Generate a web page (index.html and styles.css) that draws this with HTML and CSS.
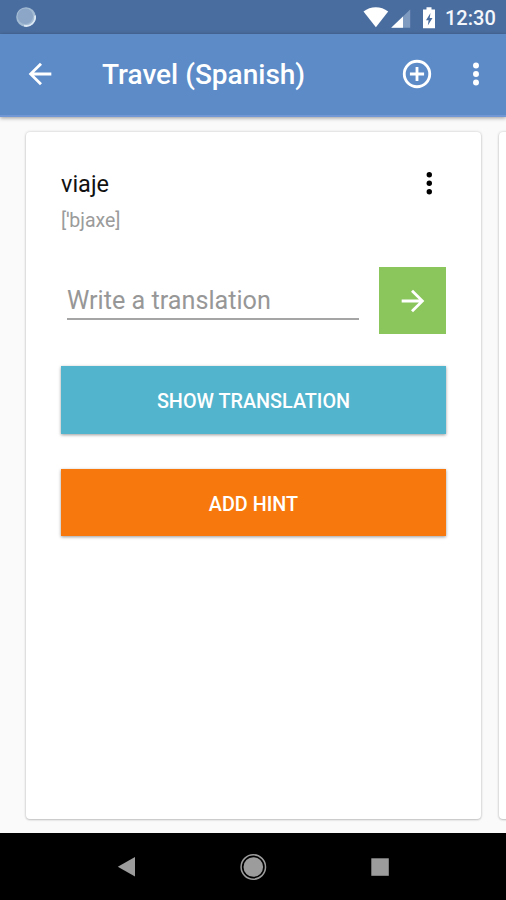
FILE: index.html
```html
<!DOCTYPE html>
<html lang="en">
<head>
<meta charset="utf-8">
<title>Travel (Spanish)</title>
<link rel="stylesheet" href="styles.css">
</head>
<body>
<div class="screen">
  <div class="status">
    <svg class="spinner" width="22" height="22" viewBox="0 0 22 22"><circle cx="11" cy="11" r="9.800" fill="#a3bbd3"/><circle cx="10.300" cy="10.200" r="7.800" fill="#8ba6c6"/><path d="M20 9.500a9 9 0 0 1-11 10.200" fill="none" stroke="#dce9f5" stroke-width="1.800"/></svg>
    <svg class="signals" width="73" height="24" viewBox="0 0 73 24">
      <path d="M0.500 5.600C7.500-.2 18-.2 25.200 5.600L12.900 21.300z" fill="#fff"/>
      <path d="M47.200 3.500V21.800H28.200z" fill="#7f9cc0"/>
      <path d="M40 10.500V21.800H28.200z" fill="#fff"/>
      <path d="M60 3.500h3.500V1.200h5V3.500H72v18.800H60z" fill="#fff"/>
      <path d="M67.500 7l-4.500 7.200h2.600l-.8 5.300 4.700-7.600h-2.800z" fill="#4a6d9f"/>
    </svg>
    <span class="time">12:30</span>
  </div>
  <header class="toolbar">
    <svg class="icon" viewBox="0 0 24 24"><path d="M20 11H7.830l5.590-5.590L12 4l-8 8 8 8 1.410-1.410L7.830 13H20z"/></svg>
    <h1 class="title">Travel (Spanish)</h1>
    <svg class="icon add" viewBox="0 0 24 24"><path d="M13 7h-2v4H7v2h4v4h2v-4h4v-2h-4zM12 2a10 10 0 1 0 0 20 10 10 0 0 0 0-20zm0 18a8 8 0 1 1 0-16 8 8 0 0 1 0 16z"/></svg>
    <svg class="icon" viewBox="0 0 24 24"><circle cx="12" cy="6" r="2.100"/><circle cx="12" cy="12" r="2.100"/><circle cx="12" cy="18" r="2.100"/></svg>
  </header>
  <main class="pager">
    <section class="card">
      <div class="word-row">
        <div>
          <div class="word">viaje</div>
          <div class="phonetic">[ˈbjaxe]</div>
        </div>
        <svg class="icon dark" viewBox="0 0 24 24"><circle cx="12.200" cy="6.200" r="1.900"/><circle cx="12.200" cy="12.200" r="1.900"/><circle cx="12.200" cy="18.200" r="1.900"/></svg>
      </div>
      <div class="answer-row">
        <div class="field"><span class="hint">Write a translation</span></div>
        <div class="submit"><svg class="icon" viewBox="0 0 24 24"><path d="M12 4l-1.410 1.410L16.170 11H4v2h12.170l-5.580 5.590L12 20l8-8z"/></svg></div>
      </div>
      <div class="button show"><span>SHOW TRANSLATION</span></div>
      <div class="button add-hint"><span>ADD HINT</span></div>
    </section>
    <section class="card next"></section>
  </main>
  <nav class="navbar">
    <svg width="40" height="30" viewBox="0 0 40 30"><path d="M11.800 14.800L29 5v19.600z" fill="#9c9c9c"/></svg>
    <svg width="40" height="30" viewBox="0 0 40 30"><circle cx="20.300" cy="15" r="12.200" fill="none" stroke="#9c9c9c" stroke-width="1.500"/><circle cx="20.300" cy="15" r="9.800" fill="#9c9c9c"/></svg>
    <svg width="40" height="30" viewBox="0 0 40 30"><path d="M11.300 6.300h17.500v17.500H11.300z" fill="#9c9c9c"/></svg>
  </nav>
</div>
</body>
</html>
```
FILE: styles.css
```css
* { box-sizing: border-box; }
body { margin: 0; font-family: Roboto, "Noto Sans", sans-serif; }
svg { display: block; flex: none; }
.screen { width: 506px; height: 900px; display: flex; flex-direction: column; overflow: hidden; background: #fafafa; }
.status { height: 34px; flex: none; background: #4a6d9f; display: flex; align-items: center; padding: 0 11px 0 15px; }
.signals { margin-left: auto; margin-right: 9px; margin-bottom: -1px; }
.time { width: 50px; font-size: 20px; line-height: 24px; font-weight: 500; color: #f3f7fb; white-space: nowrap; margin-top: 2px; }
.toolbar { height: 83px; flex: none; background: #5c8bc8; display: flex; align-items: center; padding: 0 13px 2px 23px; border-bottom: 2px solid #7198d4; box-shadow: 0 1px 4px rgba(0,0,0,.4); position: relative; }
.icon { width: 34px; height: 34px; fill: #fff; }
.title { margin: 3px 0 0 45px; font-size: 28px; line-height: 36px; font-weight: 500; color: #fff; white-space: nowrap; }
.add { margin-left: auto; margin-right: 25px; }
.pager { flex: 1; min-height: 0; display: flex; gap: 18px; padding: 15px 0 14px 26px; }
.card { width: 455px; flex: none; background: #fff; border-radius: 4px; padding: 35px 35px 0; box-shadow: 0 0 3px rgba(0,0,0,.2), 0 1px 2px rgba(0,0,0,.16); }
.word-row { display: flex; justify-content: space-between; height: 100px; }
.word { font-size: 23.500px; line-height: 34px; color: #111; }
.phonetic { font-size: 19.500px; line-height: 28px; margin-top: 6px; color: #9b9b9b; }
.dark { fill: #000; }
.word-row .icon { margin-top: -1px; }
.answer-row { display: flex; justify-content: space-between; padding-left: 6px; height: 67px; }
.field { width: 292px; height: 53px; border-bottom: 2px solid #a5a5a5; padding-top: 17px; }
.hint { display: block; font-size: 25.200px; line-height: 34px; color: #979797; white-space: nowrap; }
.submit { width: 67px; height: 67px; background: #8bc65d; display: flex; align-items: center; justify-content: center; }
.button { height: 68px; display: flex; align-items: center; justify-content: center; padding-top: 2px; color: #fff; font-size: 19.800px; font-weight: 500; white-space: nowrap; box-shadow: 0 1px 3px rgba(0,0,0,.4); }
.show { margin-top: 32px; background: #52b4cd; }
.add-hint { margin-top: 35px; height: 67px; padding-top: 3px; background: #f7780d; }
.navbar { height: 67px; flex: none; background: #000; display: flex; align-items: center; justify-content: center; gap: 87px; }
```
